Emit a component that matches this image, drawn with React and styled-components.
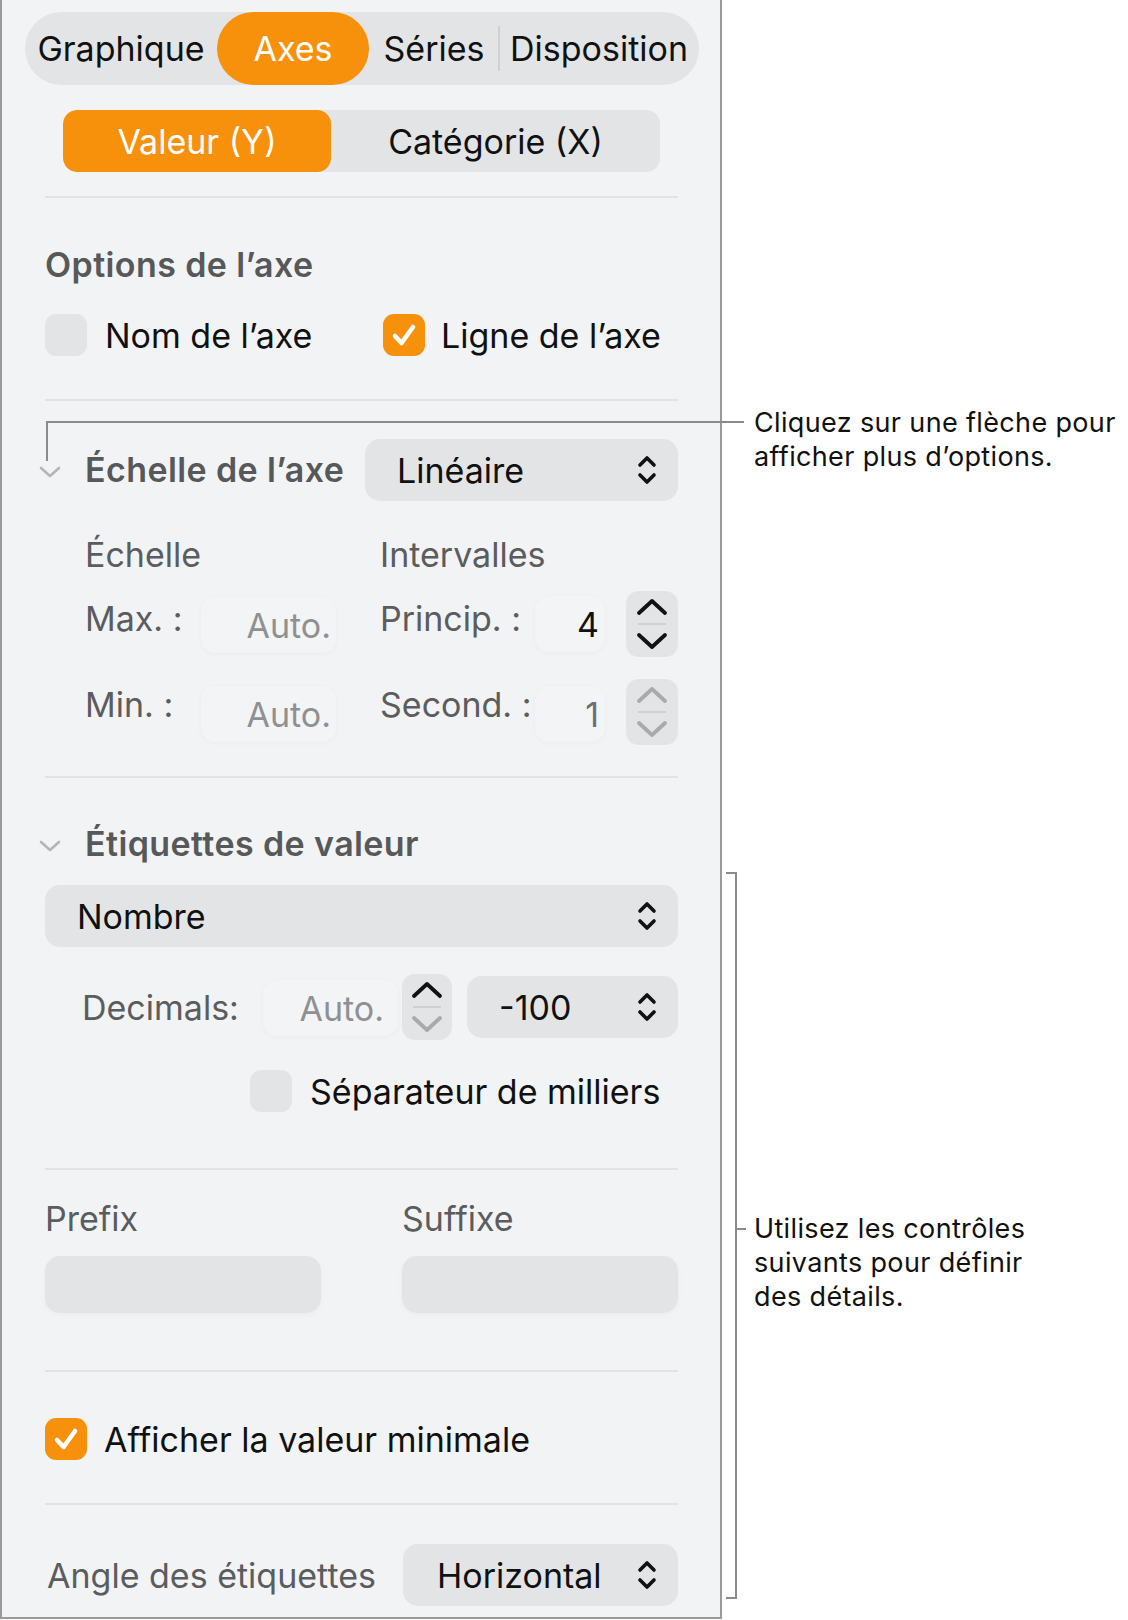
import React from 'react';
import styled, { createGlobalStyle } from 'styled-components';

const GlobalStyle = createGlobalStyle`
  html, body {
    margin: 0;
    padding: 0;
    background: #ffffff;
  }
  body {
    font-family: Inter, "Noto Sans", sans-serif;
    color: #111111;
  }
`;

const ORANGE = '#f7910b';
const FILL = '#e3e4e6';

const Page = styled.div`
  position: relative;
  width: 1128px;
  height: 1620px;
  display: flex;
  align-items: flex-start;
`;

const Panel = styled.div`
  width: 722px;
  box-sizing: border-box;
  height: 1619px;
  background: #f2f3f5;
  border-left: 2px solid #9a9a9c;
  border-right: 2px solid #9a9a9c;
  border-bottom: 2px solid #9a9a9c;
  padding: 12px 42px 0 43px;
  display: flex;
  flex-direction: column;
`;

const TabBar = styled.div`
  display: flex;
  align-items: center;
  height: 73px;
  margin: 0 -21px 0 -20px;
  background: ${FILL};
  border-radius: 37px;
`;

const Tab = styled.div`
  position: relative;
  width: ${p => p.$w}px;
  height: 73px;
  display: flex;
  align-items: center;
  justify-content: center;
  font-size: 34px;
  color: ${p => (p.$active ? '#ffffff' : '#111111')};
  background: ${p => (p.$active ? ORANGE : 'transparent')};
  border-radius: 37px;
  ${p =>
    p.$sep &&
    `&::before {
      content: '';
      position: absolute;
      left: -1px;
      top: 14px;
      bottom: 14px;
      width: 2px;
      background: #cfd0d2;
    }`}
`;

const SubSeg = styled.div`
  display: flex;
  height: 62px;
  margin: 25px 18px 0 18px;
  background: ${FILL};
  border-radius: 14px;
  overflow: hidden;
`;

const SubItem = styled.div`
  width: ${p => p.$w}px;
  display: flex;
  align-items: center;
  justify-content: center;
  font-size: 34px;
  color: ${p => (p.$active ? '#ffffff' : '#111111')};
  background: ${p => (p.$active ? ORANGE : 'transparent')};
  border-radius: 14px;
`;

const Divider = styled.div`
  height: 2px;
  background: #e1e2e4;
  margin-top: ${p => p.$mt}px;
`;

const SectionTitle = styled.div`
  font-size: 34px;
  font-weight: 600;
  letter-spacing: 0.4px;
  color: #57585a;
  line-height: 40px;
  margin-top: ${p => p.$mt || 0}px;
`;

const HeaderRow = styled.div`
  position: relative;
  display: flex;
  align-items: center;
  justify-content: space-between;
  margin-top: ${p => p.$mt}px;
  padding-left: 40px;
`;

const Disc = styled.span`
  position: absolute;
  left: -6px;
  top: ${p => p.$top}px;
  display: flex;
`;

const CheckRow = styled.div`
  display: flex;
  align-items: center;
  height: 42px;
  margin-top: ${p => p.$mt}px;
  padding-left: ${p => p.$indent || 0}px;
`;

const CheckItem = styled.div`
  display: flex;
  align-items: center;
  gap: ${p => p.$gap || 18}px;
  width: ${p => (p.$w ? `${p.$w}px` : 'auto')};
  font-size: 34px;
  color: #111111;
  white-space: nowrap;
`;

const Box = styled.div`
  width: 42px;
  height: 42px;
  border-radius: 11px;
  background: ${p => (p.$on ? ORANGE : FILL)};
  display: flex;
  align-items: center;
  justify-content: center;
  flex-shrink: 0;
`;

const Popup = styled.div`
  width: ${p => (p.$w ? `${p.$w}px` : 'auto')};
  height: 62px;
  box-sizing: border-box;
  background: ${FILL};
  border-radius: 15px;
  display: flex;
  align-items: center;
  justify-content: space-between;
  padding: 0 20px 0 ${p => p.$pl || 32}px;
  font-size: 34px;
  color: #111111;
  margin-top: ${p => p.$mt || 0}px;
`;

const ScaleGrid = styled.div`
  display: grid;
  grid-template-columns: 116px 135px 44px 155px 70px 21px 52px;
  padding-left: 40px;
  align-items: center;
  margin-top: ${p => p.$mt}px;
`;

const SubHead = styled.div`
  grid-column: ${p => p.$col};
  font-size: 34px;
  color: #5b5c5e;
  line-height: 40px;
`;

const Label = styled.div`
  grid-column: ${p => p.$col || 'auto'};
  font-size: 34px;
  color: #5b5c5e;
  white-space: nowrap;
  margin-bottom: ${p => p.$up || 0}px;
`;

const Field = styled.div`
  grid-column: ${p => p.$col || 'auto'};
  height: 56px;
  border-radius: 14px;
  background: #f3f4f6;
  box-shadow: 0 1px 5px rgba(0, 0, 0, 0.035);
  display: flex;
  align-items: center;
  justify-content: flex-end;
  padding-right: ${p => p.$pr || 5}px;
  font-size: 34px;
  color: ${p => (p.$dark ? '#111111' : p.$mid ? '#6e6f71' : '#8f9092')};
  margin-top: ${p => p.$dy || 0}px;
`;

const Stepper = styled.div`
  grid-column: ${p => p.$col || 'auto'};
  height: 66px;
  border-radius: 13px;
  background: ${FILL};
  display: flex;
  align-items: center;
  justify-content: center;
`;

const DecGrid = styled.div`
  display: grid;
  grid-template-columns: 181px 135px 4px 50px 15px 211px;
  padding-left: 37px;
  align-items: center;
  margin-top: ${p => p.$mt}px;
`;

const PairGrid = styled.div`
  display: grid;
  grid-template-columns: 276px 276px;
  justify-content: space-between;
  margin-top: ${p => p.$mt}px;
`;

const PairLabel = styled.div`
  font-size: 34px;
  line-height: 40px;
  color: #5b5c5e;
`;

const TextBox = styled.div`
  height: 57px;
  border-radius: 15px;
  background: ${FILL};
  box-shadow: 0 2px 6px rgba(0, 0, 0, 0.03);
`;

const AngleRow = styled.div`
  display: flex;
  align-items: center;
  justify-content: space-between;
  margin-top: ${p => p.$mt}px;
  padding-left: 2px;
`;

const Leader = styled.div`
  position: absolute;
  background: #8b8b8d;
  left: ${p => p.$x}px;
  top: ${p => p.$y}px;
  width: ${p => p.$w}px;
  height: ${p => p.$h}px;
`;

const Callout = styled.div`
  position: absolute;
  left: ${p => p.$x}px;
  top: ${p => p.$y}px;
  font-family: Inter, "Noto Sans", sans-serif;
  font-size: 27px;
  line-height: 34px;
  letter-spacing: 0.35px;
  color: #111111;
`;

const Chevrons = ({ color = '#111' }) => (
  <svg width="22" height="40" viewBox="0 0 22 40" fill="none">
    <path d="M4 15 L11 8 L18 15" stroke={color} strokeWidth="3.6" strokeLinecap="round" strokeLinejoin="round" />
    <path d="M4 25 L11 32 L18 25" stroke={color} strokeWidth="3.6" strokeLinecap="round" strokeLinejoin="round" />
  </svg>
);

const StepIcon = ({ up = '#111', down = '#111' }) => (
  <svg width="40" height="62" viewBox="0 0 40 62" fill="none">
    <path d="M7 20 L20 8 L33 20" stroke={up} strokeWidth="3.8" strokeLinecap="round" strokeLinejoin="round" />
    <line x1="6" y1="31" x2="34" y2="31" stroke="#cfd0d2" strokeWidth="2" />
    <path d="M7 42 L20 54 L33 42" stroke={down} strokeWidth="3.8" strokeLinecap="round" strokeLinejoin="round" />
  </svg>
);

const Check = () => (
  <svg width="42" height="42" viewBox="0 0 42 42" fill="none">
    <path d="M12 22 L18.5 29 L30 13" stroke="#fff" strokeWidth="4.6" strokeLinecap="round" strokeLinejoin="round" />
  </svg>
);

const DiscloseIcon = () => (
  <svg width="22" height="14" viewBox="0 0 22 14" fill="none">
    <path d="M2 3 L11 11 L20 3" stroke="#b4b5b7" strokeWidth="2.6" strokeLinecap="round" strokeLinejoin="round" />
  </svg>
);

export default function App() {
  return (
    <Page>
      <GlobalStyle />
      <Panel>
        <TabBar>
          <Tab $w={192}>Graphique</Tab>
          <Tab $w={152} $active>Axes</Tab>
          <Tab $w={130}>Séries</Tab>
          <Tab $w={200} $sep>Disposition</Tab>
        </TabBar>

        <SubSeg>
          <SubItem $w={268} $active>Valeur (Y)</SubItem>
          <SubItem $w={329}>Catégorie (X)</SubItem>
        </SubSeg>

        <Divider $mt={24} />

        <SectionTitle $mt={47}>Options de l’axe</SectionTitle>
        <CheckRow $mt={29}>
          <CheckItem $w={338}>
            <Box />
            Nom de l’axe
          </CheckItem>
          <CheckItem $gap={16}>
            <Box $on>
              <Check />
            </Box>
            Ligne de l’axe
          </CheckItem>
        </CheckRow>

        <Divider $mt={43} />

        <HeaderRow $mt={38}>
          <Disc $top={26}>
            <DiscloseIcon />
          </Disc>
          <SectionTitle>Échelle de l’axe</SectionTitle>
          <Popup $w={313}>
            Linéaire
            <Chevrons />
          </Popup>
        </HeaderRow>

        <ScaleGrid $mt={34}>
          <SubHead $col="1 / 4">Échelle</SubHead>
          <SubHead $col="4 / 8">Intervalles</SubHead>
        </ScaleGrid>

        <ScaleGrid $mt={16}>
          <Label $col="1" $up={12}>Max. :</Label>
          <Field $col="2" $dy={2}>Auto.</Field>
          <Label $col="4" $up={12}>Princip. :</Label>
          <Field $col="5" $pr={6} $dark>4</Field>
          <Stepper $col="7">
            <StepIcon />
          </Stepper>
        </ScaleGrid>

        <ScaleGrid $mt={22}>
          <Label $col="1" $up={16}>Min. :</Label>
          <Field $col="2" $dy={4}>Auto.</Field>
          <Label $col="4" $up={16}>Second. :</Label>
          <Field $col="5" $pr={6} $mid $dy={4}>1</Field>
          <Stepper $col="7">
            <StepIcon up="#a9aaac" down="#a9aaac" />
          </Stepper>
        </ScaleGrid>

        <Divider $mt={31} />

        <HeaderRow $mt={46}>
          <Disc $top={15}>
            <DiscloseIcon />
          </Disc>
          <SectionTitle>Étiquettes de valeur</SectionTitle>
        </HeaderRow>

        <Popup $mt={21} $pl={32}>
          Nombre
          <Chevrons />
        </Popup>

        <DecGrid $mt={27}>
          <Label>Decimals:</Label>
          <Field $pr={14} $dy={2}>Auto.</Field>
          <span />
          <Stepper>
            <StepIcon down="#a9aaac" />
          </Stepper>
          <span />
          <Popup>
            -100
            <Chevrons />
          </Popup>
        </DecGrid>

        <CheckRow $mt={30} $indent={205}>
          <CheckItem>
            <Box />
            Séparateur de milliers
          </CheckItem>
        </CheckRow>

        <Divider $mt={56} />

        <PairGrid $mt={29}>
          <PairLabel>Prefix</PairLabel>
          <PairLabel>Suffixe</PairLabel>
        </PairGrid>
        <PairGrid $mt={17}>
          <TextBox />
          <TextBox />
        </PairGrid>

        <Divider $mt={57} />

        <CheckRow $mt={46}>
          <CheckItem $gap={17}>
            <Box $on>
              <Check />
            </Box>
            Afficher la valeur minimale
          </CheckItem>
        </CheckRow>

        <Divider $mt={43} />

        <AngleRow $mt={39}>
          <Label>Angle des étiquettes</Label>
          <Popup $w={275} $pl={34}>
            Horizontal
            <Chevrons />
          </Popup>
        </AngleRow>
      </Panel>

      <Leader $x={46} $y={421} $w={698} $h={2} />
      <Leader $x={46} $y={421} $w={2} $h={40} />
      <Callout $x={754} $y={406}>
        Cliquez sur une flèche pour
        <br />
        afficher plus d’options.
      </Callout>

      <Leader $x={735} $y={872} $w={2} $h={727} />
      <Leader $x={726} $y={872} $w={10} $h={2} />
      <Leader $x={726} $y={1597} $w={10} $h={2} />
      <Leader $x={735} $y={1228} $w={11} $h={2} />
      <Callout $x={754} $y={1212}>
        Utilisez les contrôles
        <br />
        suivants pour définir
        <br />
        des détails.
      </Callout>
    </Page>
  );
}
